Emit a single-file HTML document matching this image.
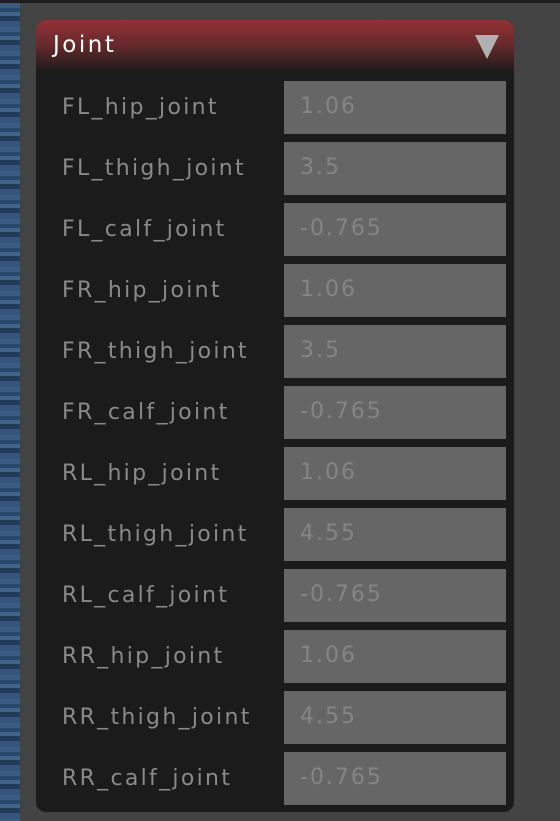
<!DOCTYPE html>
<html><head><style>
html,body{margin:0;padding:0}
body{width:560px;height:821px;background:#434343;position:relative;overflow:hidden;font-family:"DejaVu Sans","Liberation Sans",sans-serif}
.top{position:absolute;left:0;top:0;width:560px;height:3px;background:#1e1e1e}
.blue{position:absolute;left:0;top:3px;width:20px;height:818px;background:repeating-linear-gradient(180deg,#3b5b80 0 5px,#2a4868 5px 9px,#44648a 9px 13px,#203c5a 13px 18px,#35557a 18px 24px)}
.panel{position:absolute;left:36px;top:20px;width:478px;height:792px;background:#1b1b1b;border-radius:10px;overflow:hidden}
.hdr{height:52px;background:linear-gradient(180deg,#933236 0%,#6a2a2c 45%,#1b1b1b 100%);position:relative}
.hdr span{position:absolute;left:17px;top:12px;color:#fff;font-size:23px;letter-spacing:2.5px}
.tri{position:absolute;left:439px;top:15px;width:0;height:0;border-left:12px solid transparent;border-right:12px solid transparent;border-top:24px solid #b0b0b0}
.row{position:absolute;left:0;width:478px;height:53px}
.row .l{position:absolute;left:26px;top:14px;color:#8a8a8a;font-size:22px;letter-spacing:2.3px}
.row .v{position:absolute;left:248px;top:0;width:222px;height:53px;background:#666}
.row .v span{position:absolute;left:16px;top:13px;color:#858585;font-size:22px;letter-spacing:2px}
</style></head><body>
<div class="top"></div>
<div class="blue"></div>
<div class="panel">
<div class="hdr"><span>Joint</span><div class="tri"></div></div>
<div class="row" style="top:61px"><div class="l">FL_hip_joint</div><div class="v"><span>1.06</span></div></div>
<div class="row" style="top:122px"><div class="l">FL_thigh_joint</div><div class="v"><span>3.5</span></div></div>
<div class="row" style="top:183px"><div class="l">FL_calf_joint</div><div class="v"><span>-0.765</span></div></div>
<div class="row" style="top:244px"><div class="l">FR_hip_joint</div><div class="v"><span>1.06</span></div></div>
<div class="row" style="top:305px"><div class="l">FR_thigh_joint</div><div class="v"><span>3.5</span></div></div>
<div class="row" style="top:366px"><div class="l">FR_calf_joint</div><div class="v"><span>-0.765</span></div></div>
<div class="row" style="top:427px"><div class="l">RL_hip_joint</div><div class="v"><span>1.06</span></div></div>
<div class="row" style="top:488px"><div class="l">RL_thigh_joint</div><div class="v"><span>4.55</span></div></div>
<div class="row" style="top:549px"><div class="l">RL_calf_joint</div><div class="v"><span>-0.765</span></div></div>
<div class="row" style="top:610px"><div class="l">RR_hip_joint</div><div class="v"><span>1.06</span></div></div>
<div class="row" style="top:671px"><div class="l">RR_thigh_joint</div><div class="v"><span>4.55</span></div></div>
<div class="row" style="top:732px"><div class="l">RR_calf_joint</div><div class="v"><span>-0.765</span></div></div>
</div>
</body></html>
